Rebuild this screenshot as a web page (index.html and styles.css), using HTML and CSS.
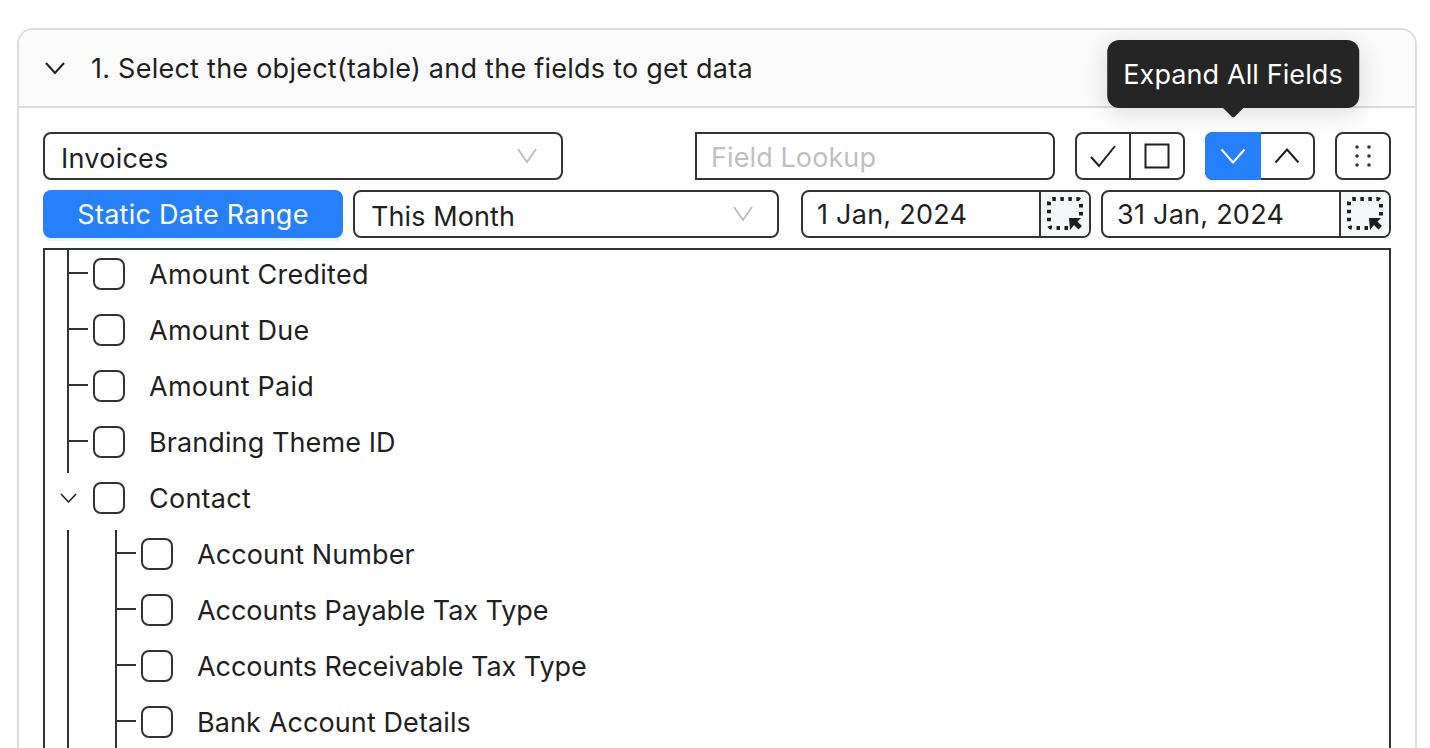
FILE: index.html
```html
<!DOCTYPE html>
<html lang="en">
<head>
    <meta charset="UTF-8">
    <title>Select the object and fields</title>
    <link rel="stylesheet" href="styles.css">
</head>
<body>
    <div class="panel">
        <div class="panelHeader">
            <svg class="headerChevron" width="20" height="14" viewBox="0 0 20 14"><path d="M1 2l9 10 9-10"/></svg>
            <span>1. Select the object(table) and the fields to get data</span>
        </div>

        <div class="panelBody">
            <div class="toolbar">
                <div class="selectBox objectSelect">
                    <span>Invoices</span>
                    <svg class="selectChevron" width="20" height="15" viewBox="0 0 20 15"><path d="M1 1l9 13 9-13"/></svg>
                </div>
                <input class="lookup" type="text" placeholder="Field Lookup">
                <div class="btnGroup">
                    <button class="iconBtn">
                        <svg width="28" height="24" viewBox="0 0 28 24"><path d="M2 13l8 9L26 2"/></svg>
                    </button>
                    <button class="iconBtn">
                        <svg width="26" height="26" viewBox="0 0 26 26"><rect x="1.5" y="1.5" width="23" height="23"/></svg>
                    </button>
                </div>
                <div class="btnGroup">
                    <button class="iconBtn active">
                        <svg width="26" height="16" viewBox="0 0 26 16"><path d="M1.5 1.5L13 14.5 24.5 1.5"/></svg>
                        <div class="tooltip">Expand All Fields</div>
                    </button>
                    <button class="iconBtn">
                        <svg width="26" height="16" viewBox="0 0 26 16"><path d="M1.5 14.5L13 1.5l11.500 13"/></svg>
                    </button>
                </div>
                <button class="iconBtn single">
                    <svg width="16" height="24" viewBox="0 0 16 24">
                        <circle class="dot" cx="2" cy="3" r="1.800"/><circle class="dot" cx="14" cy="3" r="1.800"/>
                        <circle class="dot" cx="2" cy="12" r="1.800"/><circle class="dot" cx="14" cy="12" r="1.800"/>
                        <circle class="dot" cx="2" cy="21" r="1.800"/><circle class="dot" cx="14" cy="21" r="1.800"/>
                    </svg>
                </button>
            </div>

            <div class="toolbar">
                <button class="rangeBtn">Static Date Range</button>
                <div class="selectBox periodSelect">
                    <span>This Month</span>
                    <svg class="selectChevron" width="20" height="15" viewBox="0 0 20 15"><path d="M1 1l9 13 9-13"/></svg>
                </div>
                <div class="dateBox firstDate">
                    <span class="dateText">1 Jan, 2024</span>
                    <div class="dateIcon">
                        <svg width="36" height="34" viewBox="0 0 36 34">
                            <path class="dots" d="M21 31H6q-4 0-4-4V6q0-4 4-4h24q4 0 4 4v13"/>
                            <path class="cursor" d="M22 21h12l-3.500 3.500 4.500 4.500-3.500 3.500-4.500-4.500L23 33z"/>
                        </svg>
                    </div>
                </div>
                <div class="dateBox">
                    <span class="dateText">31 Jan, 2024</span>
                    <div class="dateIcon">
                        <svg width="36" height="34" viewBox="0 0 36 34">
                            <path class="dots" d="M21 31H6q-4 0-4-4V6q0-4 4-4h24q4 0 4 4v13"/>
                            <path class="cursor" d="M22 21h12l-3.500 3.500 4.500 4.500-3.500 3.500-4.500-4.500L23 33z"/>
                        </svg>
                    </div>
                </div>
            </div>

            <div class="tree">
                <div class="treeScroll">
                    <ul class="branch topBranch">
                        <li class="row"><span class="stem"></span><span class="check"></span><span class="label">Amount Credited</span></li>
                        <li class="row"><span class="stem"></span><span class="check"></span><span class="label">Amount Due</span></li>
                        <li class="row"><span class="stem"></span><span class="check"></span><span class="label">Amount Paid</span></li>
                        <li class="row"><span class="stem"></span><span class="check"></span><span class="label tight">Branding Theme ID</span></li>
                    </ul>
                    <div class="row parentRow">
                        <svg class="treeChevron" width="17" height="10" viewBox="0 0 17 10"><path d="M1 1l7.500 8L16 1"/></svg>
                        <span class="check"></span><span class="label">Contact</span>
                    </div>
                    <div class="branch outerBranch">
                        <ul class="branch childBranch">
                            <li class="row"><span class="stem"></span><span class="check"></span><span class="label tight">Account Number</span></li>
                            <li class="row"><span class="stem"></span><span class="check"></span><span class="label tighter">Accounts Payable Tax Type</span></li>
                            <li class="row"><span class="stem"></span><span class="check"></span><span class="label tighter">Accounts Receivable Tax Type</span></li>
                            <li class="row"><span class="stem"></span><span class="check"></span><span class="label tight">Bank Account Details</span></li>
                        </ul>
                    </div>
                </div>
            </div>
        </div>
    </div>
</body>
</html>
```

FILE: styles.css
```css
body {
    margin: 0;
    padding: 28px 13px 0 17px;
    box-sizing: border-box;
    height: 748px;
    overflow: hidden;
    background: white;
    font-family: Inter, "Liberation Sans", sans-serif;
    font-size: 27px;
    letter-spacing: 0.25px;
    color: #1f1f1f;
}

svg {
    display: block;
    fill: none;
}

svg path, svg rect {
    stroke: currentColor;
    stroke-width: 2;
}

.panel {
    width: 1400px;
    height: 720px;
    overflow: hidden;
    box-sizing: border-box;
    border: 2px solid #dcdcdc;
    border-bottom: none;
    border-radius: 16px 16px 0 0;
}

.panelHeader {
    display: flex;
    align-items: center;
    height: 76px;
    padding-left: 26px;
    background: #fafafa;
    border-bottom: 2px solid #dcdcdc;
}

.headerChevron {
    margin-right: 26px;
}

.panelBody {
    padding: 24px 24px 0;
}

.toolbar {
    display: flex;
    height: 48px;
    margin-bottom: 10px;
}

.selectBox, .lookup, .dateBox, .btnGroup, .single {
    box-sizing: border-box;
    height: 48px;
    border: 2px solid #333;
    border-radius: 8px;
    background: white;
}

.selectBox {
    display: flex;
    align-items: center;
    justify-content: space-between;
    padding: 4px 24px 0 16px;
}

.selectChevron {
    color: #bfbfbf;
    margin-top: -6px;
}

.objectSelect {
    width: 520px;
}

.periodSelect {
    width: 426px;
    margin-left: 10px;
    letter-spacing: 0.1px;
}

.lookup {
    width: 360px;
    margin-left: 132px;
    padding: 2px 14px 0;
    border-radius: 0 8px 8px 0;
    font: inherit;
    letter-spacing: 0.1px;
    outline: none;
}

.lookup::placeholder {
    color: #bfbfbf;
    opacity: 1;
}

.btnGroup {
    display: flex;
    width: 110px;
    margin-left: 20px;
    background: none;
}

.iconBtn {
    position: relative;
    display: flex;
    align-items: center;
    justify-content: center;
    flex: 1;
    padding: 0;
    border: none;
    background: none;
    color: #1f1f1f;
    font: inherit;
    letter-spacing: inherit;
}

.iconBtn + .iconBtn {
    border-left: 2px solid #333;
}

.iconBtn.active {
    flex: none;
    width: 56px;
    margin: -2px 0 -2px -2px;
    background: #2680fb;
    color: white;
    border-radius: 8px 0 0 8px;
}

.iconBtn.active + .iconBtn {
    border-left: none;
}

.single {
    flex: none;
    width: 56px;
    margin-left: 20px;
    border: 2px solid #333;
}

.dot {
    fill: #333;
}

.tooltip {
    position: absolute;
    left: 50%;
    bottom: 72px;
    transform: translateX(-50%);
    padding: 19px 16px 17px;
    line-height: 32px;
    letter-spacing: 0.1px;
    white-space: nowrap;
    color: white;
    background: #252525;
    border-radius: 12px;
    box-shadow: 0 6px 24px rgba(0, 0, 0, 0.14);
}

.tooltip::after {
    content: "";
    position: absolute;
    left: 50%;
    bottom: -9px;
    width: 18px;
    height: 18px;
    margin-left: -9px;
    background: #252525;
    border-radius: 0 0 3px 0;
    transform: rotate(45deg) scale(0.8);
}

.rangeBtn {
    width: 300px;
    height: 48px;
    padding: 0;
    border: none;
    border-radius: 8px;
    background: #2680fb;
    box-shadow: 0 3px 0 #e6f4ff;
    color: white;
    font: inherit;
    letter-spacing: inherit;
}

.dateBox {
    display: flex;
    align-items: center;
    width: 290px;
    margin-left: 10px;
    overflow: hidden;
}

.firstDate {
    margin-left: 22px;
}

.dateText {
    flex: 1;
    padding-left: 14px;
}

.dateIcon {
    display: flex;
    align-items: center;
    justify-content: center;
    box-sizing: border-box;
    width: 50px;
    height: 100%;
    background: #f5f6f8;
    border-left: 2px solid #333;
}

.dots {
    stroke-width: 4 !important;
    stroke-dasharray: 3.5 4.5;
}

.cursor {
    fill: #1f1f1f;
    stroke-width: 0 !important;
}

.tree {
    box-sizing: border-box;
    height: 600px;
    border: 2px solid #333;
    overflow: hidden;
}

.treeScroll {
    margin-top: -4px;
}

ul {
    list-style: none;
    margin: 0;
    padding: 0;
}

.row {
    display: flex;
    align-items: center;
    height: 56px;
}

.branch {
    border-left: 2px solid #333;
}

.topBranch {
    margin-left: 22px;
    padding-bottom: 3px;
}

.parentRow {
    margin-top: -3px;
    padding-left: 15px;
}

.treeChevron {
    margin-right: 16px;
}

.treeChevron path {
    stroke-width: 1.5;
}

.outerBranch {
    display: flow-root;
    margin: 4px 0 0 22px;
}

.childBranch {
    display: flow-root;
    margin-left: 46px;
}

.childBranch .row:first-child {
    margin-top: -4px;
}

.stem {
    width: 19px;
    height: 2px;
    margin-top: -3px;
    background: #333;
}

.check {
    box-sizing: border-box;
    width: 32px;
    height: 32px;
    margin-left: 5px;
    border: 2px solid #333;
    border-radius: 8px;
}

.parentRow .check {
    margin-left: 0;
}

.label {
    margin-left: 24px;
}

.tight {
    letter-spacing: 0.1px;
}

.tighter {
    letter-spacing: -0.05px;
}
```
